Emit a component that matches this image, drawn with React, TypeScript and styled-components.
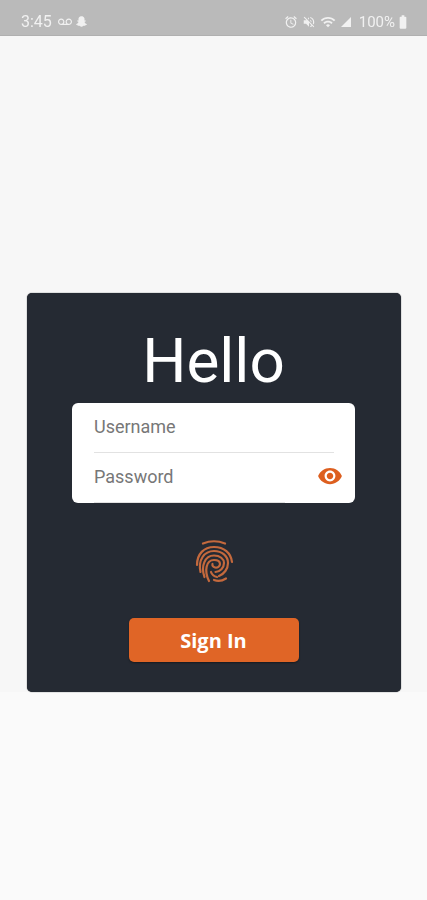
import React from 'react';
import styled, { createGlobalStyle } from 'styled-components';
import { FaSnapchatGhost } from 'react-icons/fa';
import {
  MdAccessAlarm,
  MdBatteryFull,
  MdSignalCellular4Bar,
  MdVoicemail,
  MdVolumeOff,
  MdWifi,
  MdVisibility,
} from 'react-icons/md';

const GlobalStyle = createGlobalStyle`
  html, body {
    margin: 0;
    padding: 0;
    background: #fafafa;
    font-family: 'Roboto', sans-serif;
  }
`;

function Fingerprint() {
  return (
    <FingerprintSvg viewBox="0 0 40 46" fill="none" stroke="#c4693d" strokeWidth="2.2" strokeLinecap="round">
      <path d="M9 4.5Q20 0 31 4.5" />
      <path d="M3 26C3 15 10 8 20 8C30 8 37 14 38 23" />
      <path d="M6.5 33C4 21 10 12 20 12C28 12 34 17 34 24C34 30 30 35 25 37" />
      <path d="M10.5 38C6.5 27 11 16.5 20 16.5C26 16.5 30 20 30 24C30 29 26 32.5 21.5 33" />
      <path d="M15 42C10 32 12 21 20 21C23.5 21 26 22.5 26 25C26 27.5 23.5 29 21 28.5C19 28 18 26.5 18.5 25" />
      <path d="M20 41C24 42.5 28 42 32 39.5" />
      <path d="M17 33C18 36 20 37.5 23 38" />
    </FingerprintSvg>
  );
}

export default function App() {
  return (
    <Screen>
      <GlobalStyle />
      <StatusBar>
        <StatusGroup>
          <Clock>3:45</Clock>
          <MdVoicemail size={14} />
          <FaSnapchatGhost size={11} />
        </StatusGroup>
        <StatusGroup>
          <MdAccessAlarm size={14} />
          <MdVolumeOff size={14} />
          <MdWifi size={16} />
          <MdSignalCellular4Bar size={12} />
          <Percent>
            100%
            <MdBatteryFull size={16} />
          </Percent>
        </StatusGroup>
      </StatusBar>
      <Main>
        <Card>
          <Title>Hello</Title>
          <Form>
            <Field>
              <FieldLabel>Username</FieldLabel>
            </Field>
            <Field last>
              <FieldLabel>Password</FieldLabel>
              <EyeButton>
                <MdVisibility size={26} />
              </EyeButton>
              <PartialLine />
            </Field>
          </Form>
          <Fingerprint />
          <SignIn>Sign In</SignIn>
        </Card>
      </Main>
    </Screen>
  );
}

const Screen = styled.div`
  width: 427px;
  height: 900px;
  display: flex;
  flex-direction: column;
  overflow: hidden;
  background: #fafafa;
`;

const StatusBar = styled.div`
  height: 36px;
  flex-shrink: 0;
  display: flex;
  align-items: center;
  justify-content: space-between;
  padding: 8px 16px 0 21px;
  background: #bababa;
  color: #f1f1f1;
  border-bottom: 1px solid #b0b0b0;
  box-sizing: border-box;

  svg {
    filter: blur(0.5px);
  }
`;

const StatusGroup = styled.div`
  display: flex;
  align-items: center;
  gap: 4px;
`;

const Clock = styled.span`
  font-size: 16px;
  margin-right: 2px;
  filter: blur(0.5px);
`;

const Percent = styled.span`
  display: flex;
  align-items: center;
  font-size: 15px;
  margin-left: 3px;
  filter: blur(0.5px);
`;

const Main = styled.main`
  height: 656px;
  flex-shrink: 0;
  display: flex;
  align-items: flex-end;
  justify-content: center;
  background: #f7f7f7;
`;

const Card = styled.section`
  width: 374px;
  height: 399px;
  box-sizing: border-box;
  display: flex;
  flex-direction: column;
  align-items: center;
  background: #252a33;
  border-radius: 5px;
  box-shadow: 0 0 1px #11141a;
`;

const Title = styled.h1`
  margin: 26px 0 0;
  height: 84px;
  font-family: 'Roboto', sans-serif;
  font-size: 62px;
  line-height: 84px;
  font-weight: 400;
  color: #ffffff;
`;

const Form = styled.div`
  width: 283px;
  height: 100px;
  display: flex;
  flex-direction: column;
  background: #ffffff;
  border-radius: 6px;
`;

const Field = styled.div<{ last?: boolean }>`
  position: relative;
  height: 50px;
  box-sizing: border-box;
  margin: 0 21px 0 22px;
  padding-bottom: 2px;
  display: flex;
  align-items: center;
  border-bottom: 1px solid ${(props) => (props.last ? 'transparent' : '#e2e2e2')};
`;

const FieldLabel = styled.span`
  font-size: 18px;
  color: #777777;
`;

const EyeButton = styled.span`
  position: absolute;
  right: -9px;
  top: 10px;
  display: flex;
  color: #dd5f1f;
`;

const PartialLine = styled.span`
  position: absolute;
  left: 0;
  bottom: -1px;
  width: 191px;
  height: 1px;
  background: #e2e2e2;
`;

const FingerprintSvg = styled.svg`
  width: 40px;
  height: 46px;
  margin-top: 36px;
`;

const SignIn = styled.button`
  width: 170px;
  height: 44px;
  margin-top: 33px;
  border: 0;
  border-radius: 5px;
  background: #e06526;
  color: #ffffff;
  font-family: 'Open Sans', sans-serif;
  font-size: 20px;
  font-weight: 700;
  box-shadow: 0 1px 2px rgba(0, 0, 0, 0.4);
`;
